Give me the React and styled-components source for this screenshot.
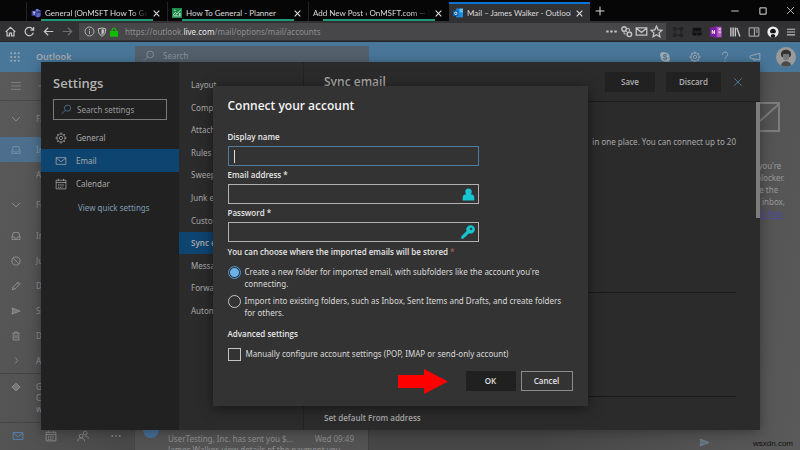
import React, { useState } from "react";
import styled, { createGlobalStyle, css } from "styled-components";

const GlobalStyle = createGlobalStyle`
  * {
    box-sizing: border-box;
  }

  body {
    margin: 0;
    background: #505050;
  }

  button,
  input {
    font: inherit;
    color: inherit;
  }

  h1, h2, h3, p, ul {
    margin: 0;
    padding: 0;
  }

  ul {
    list-style: none;
  }
`;

const Page = styled.div`
  display: flex;
  flex-direction: column;
  height: 100vh;
  overflow: hidden;
  font-family: "Noto Sans", "Open Sans", sans-serif;
  font-size: 8px;
  line-height: 12px;
  color: #a8a8a8;
`;

const IconButton = styled.button`
  display: flex;
  align-items: center;
  justify-content: center;
  flex: none;
  padding: 0;
  border: 0;
  background: none;
  color: ${(p) => p.$color || "inherit"};
`;

const Svg = styled.svg.attrs({ viewBox: "0 0 16 16", "aria-hidden": true })`
  flex: none;
  display: block;
  width: ${(p) => p.$size || 12}px;
  height: ${(p) => p.$size || 12}px;
  fill: none;
  stroke: currentColor;
  stroke-width: ${(p) => p.$weight || 1.2};
`;

/* ---------- browser chrome ---------- */

const TabStrip = styled.div`
  display: flex;
  flex: none;
  height: 21px;
  padding-left: 26px;
  background: #060607;
  color: #dcdcdc;
`;

const Tab = styled.div`
  display: flex;
  align-items: center;
  gap: 4px;
  flex: 0 1 141px;
  min-width: 0;
  margin-top: 2px;
  padding: 3px 6px 0 4px;
  border-left: 1px solid #232325;
  background: linear-gradient(#1d9a78, #1d9a78) 14px 100% / 112px 2px no-repeat;

  ${(p) =>
    p.$active &&
    css`
      padding-top: 1px;
      border-left: 0;
      border-top: 2px solid #0a74d8;
      background: #323234;
    `}
`;

const TabTitle = styled.span`
  flex: 1;
  overflow: hidden;
  white-space: nowrap;
  font-family: Lato, "Noto Sans", sans-serif;
  mask-image: ${(p) =>
    p.$fade ? "linear-gradient(to right, #000 84%, transparent)" : "none"};
`;

const NewTab = styled(IconButton)`
  width: 20px;
`;

const WindowButtons = styled.div`
  display: flex;
  align-items: center;
  gap: 17px;
  margin-left: auto;
  padding-right: 4px;
`;

const NavBar = styled.div`
  display: flex;
  align-items: center;
  flex: none;
  height: 21px;
  padding: 1px 4px 0 5px;
  border-bottom: 1px solid #262628;
  background: #323234;
  color: #c4c4c4;
`;

const NavButtons = styled.div`
  display: flex;
  gap: 8px;
  width: 74px;
`;

const UrlBox = styled.div`
  display: flex;
  align-items: center;
  gap: 2px;
  flex: 1;
  height: 17px;
  padding: 0 3px 0 5px;
  background: #474749;
`;

const UrlInput = styled.div`
  flex: 1;
  padding-left: 4px;
  color: #8e8e8e;

  b {
    color: #e6e6e6;
    font-weight: 400;
  }
`;

const Extensions = styled.div`
  display: flex;
  align-items: center;
  gap: 7px;
  padding-left: 6px;
`;

/* ---------- mail page ---------- */

const Content = styled.div`
  position: relative;
  display: flex;
  flex-direction: column;
  flex: 1;
  min-height: 0;
`;

const OutlookBar = styled.header`
  display: flex;
  align-items: flex-start;
  flex: none;
  height: 30px;
  background: #49779a;
  color: #a3adb5;
`;

const Brand = styled.div`
  display: flex;
  align-items: center;
  gap: 15px;
  width: 135px;
  height: 30px;
  padding-left: 9px;
  font-size: 9px;
  font-weight: 600;
  line-height: 14px;
`;

const TopSearch = styled.div`
  display: flex;
  align-items: center;
  gap: 8px;
  width: 234px;
  height: 22px;
  margin-top: 4px;
  padding: 0 8px 2px;
  background: #54616d;
  color: #8a949c;
`;

const BarActions = styled.div`
  display: flex;
  align-items: center;
  gap: 15px;
  height: 30px;
  margin-left: auto;
  padding-right: 4px;
`;

const BarIcons = styled.div`
  display: flex;
  gap: 18px;
`;

const Avatar = styled.svg`
  width: 20px;
  height: 20px;
`;

const Workspace = styled.div`
  display: flex;
  flex: 1;
  min-height: 0;
  overflow: hidden;
  background: linear-gradient(100deg, #5a5a5a, #474747 25%, #474747 70%, #5a5a5a);
  color: #8f8f8f;
`;

const FolderPane = styled.nav`
  display: flex;
  flex-direction: column;
  flex: 0 0 135px;
  border-right: 1px solid #454545;
`;

const FolderRow = styled.div`
  display: flex;
  align-items: center;
  gap: 14px;
  flex: none;
  height: ${(p) => p.$height || 25}px;
  padding-left: 10px;
  white-space: nowrap;
  color: ${(p) => (p.$active ? "#7f98ad" : "inherit")};
  background: ${(p) => (p.$active ? "#4d6f8d" : "none")};
  border-bottom: ${(p) => (p.$line ? "1px solid #484848" : "0")};
`;

const IconSlot = styled.span`
  display: flex;
  justify-content: center;
  width: 12px;
`;

const Upgrade = styled.div`
  display: flex;
  gap: 14px;
  flex: none;
  height: 50px;
  padding: 7px 0 0 10px;
  border-top: 1px solid #434343;
  border-bottom: 1px solid #434343;
  line-height: 11px;
`;

const Modules = styled.div`
  display: flex;
  justify-content: space-between;
  padding: 7px 12px 0;
`;

const MessageList = styled.section`
  display: flex;
  align-items: flex-end;
  flex: 0 0 234px;
  border-right: 1px solid #3f3f3f;
`;

const Message = styled.article`
  display: flex;
  gap: 9px;
  width: 100%;
  height: 28px;
  padding: 0 14px 0 8px;
  background: #535353;
`;

const Sender = styled.span`
  width: 16px;
  height: 16px;
  border-radius: 50%;
  background: #47719a;
`;

const MessageText = styled.div`
  flex: 1;
  padding-top: 11px;
  line-height: 11px;
  white-space: nowrap;

  p {
    display: flex;
    justify-content: space-between;
  }
`;

const ReadingPane = styled.main`
  display: flex;
  align-items: flex-end;
  justify-content: flex-end;
  flex: 1;
  padding: 0 0 2px;
  color: #6e8596;
`;

const AdColumn = styled.aside`
  display: flex;
  flex-direction: column;
  justify-content: space-between;
  flex: 0 0 90px;
  padding-top: 30px;
`;

const AdMessage = styled.div`
  display: flex;
  flex-direction: column;
  align-items: center;
  padding-right: 15px;
  white-space: nowrap;
  color: #9a9a9a;

  svg {
    margin-bottom: 28px;
  }

  a {
    color: #4b4b9c;
  }
`;

const Watermark = styled.div`
  padding-right: 7px;
  text-align: right;
  font-family: "Liberation Sans", sans-serif;
  color: #111;
`;

/* ---------- settings panel ---------- */

const SettingsLayer = styled.div`
  position: absolute;
  inset: 0;
  display: flex;
  padding: 20px 40px 20px 41px;
`;

const SettingsPanel = styled.section`
  display: flex;
  flex: 1;
  min-width: 0;
  overflow: hidden;
  background: #2b2b2b;
  box-shadow: 0 2px 12px rgba(0, 0, 0, 0.35);
`;

const SettingsNav = styled.nav`
  flex: 0 0 138px;
  background: #212121;
`;

const SettingsTitle = styled.h1`
  padding: 12px 12px 0;
  font-family: "Open Sans", sans-serif;
  font-size: 13px;
  line-height: 18px;
  font-weight: 600;
  color: #b4b4b4;
`;

const SettingsSearch = styled.label`
  display: flex;
  align-items: center;
  gap: 5px;
  height: 21px;
  margin: 7px 12px 6px;
  padding: 0 7px;
  border: 1px solid #7a7a7a;
  color: #4f7593;

  input {
    width: 100%;
    min-width: 0;
    padding: 0;
    border: 0;
    outline: 0;
    background: none;
  }

  input::placeholder {
    color: #9a9a9a;
    opacity: 1;
  }
`;

const NavItem = styled.button`
  display: flex;
  align-items: center;
  gap: 9px;
  width: 100%;
  height: 23px;
  padding: 0 14px;
  border: 0;
  background: ${(p) => (p.$active ? "#0e4470" : "none")};
  text-align: left;
`;

const QuickLink = styled.a`
  display: block;
  padding: 7px 0 0 37px;
  color: #7f9cb3;
  text-decoration: none;
`;

const Categories = styled.ul`
  display: grid;
  grid-auto-rows: 1fr;
  flex: 0 0 124px;
  height: 248px;
  margin-top: 12px;
`;

const Category = styled.li`
  display: flex;
  align-items: center;
  padding-left: 12px;
  white-space: nowrap;
  background: ${(p) => (p.$active ? "#0e4470" : "none")};
  font-weight: ${(p) => (p.$active ? 600 : 400)};
`;

const Detail = styled.div`
  display: flex;
  flex-direction: column;
  flex: 1;
  min-width: 0;
  border-left: 1px solid #222;
`;

const DetailHeader = styled.header`
  display: flex;
  align-items: center;
  gap: 11px;
  flex: none;
  height: 40px;
  padding: 0 16px 0 20px;
  border-bottom: 1px solid #1d1d1d;

  h2 {
    flex: 1;
    font-family: "Open Sans", sans-serif;
    font-size: 12px;
    line-height: 18px;
    font-weight: 600;
  }
`;

const HeaderButton = styled.button`
  height: 20px;
  padding: 0 13px;
  border: 0;
  background: #212121;
  font-family: "Open Sans", sans-serif;
  font-weight: 600;
  color: #b0b0b0;

  &:first-of-type {
    padding: 0 16px;
  }
`;

const DetailBody = styled.div`
  display: flex;
  flex: 1;
  min-height: 0;
`;

const Sections = styled.div`
  flex: 1;
  padding-left: 20px;
`;

const Section = styled.div`
  height: ${(p) => p.$height}px;
  padding-top: ${(p) => p.$top || 0}px;
  border-bottom: 1px solid #191919;
  text-align: right;
`;

const SectionTitle = styled.h3`
  padding-top: 15px;
  font-family: "Open Sans", sans-serif;
  font-size: 8px;
  font-weight: 600;
`;

const ScrollThumb = styled.div`
  width: 4px;
  height: 116px;
  margin-left: 20px;
  background: #7d7d7d;
`;

/* ---------- connect dialog ---------- */

const DialogLayer = styled.div`
  position: absolute;
  inset: 0;
  display: flex;
  align-items: center;
  justify-content: center;
`;

const Dialog = styled.form`
  width: 375px;
  padding: 12px 15px 15px;
  background: #333;
  box-shadow: 0 2px 12px rgba(0, 0, 0, 0.5);
  color: #dadada;
`;

const DialogTitle = styled.h2`
  margin-bottom: 18px;
  font-family: "Open Sans", sans-serif;
  font-size: 12px;
  line-height: 16px;
  font-weight: 600;
  color: #f4f4f4;
`;

const Field = styled.div`
  display: grid;
  gap: 4px;
  width: 251px;
  margin-bottom: 4px;
`;

const Caption = styled.label`
  display: block;
  font-family: "Open Sans", sans-serif;
  font-size: 8px;
  font-weight: 600;
  line-height: 10px;
  color: #e6e6e6;
`;

const StorageCaption = styled(Caption)`
  padding-top: 1px;
`;

const Box = styled.div`
  display: flex;
  align-items: center;
  height: 20px;
  padding-right: 3px;
  border: 1px solid ${(p) => (p.$focused ? "#4f7d9e" : "#b5b0b0")};
  color: #18c5d2;

  input {
    flex: 1;
    min-width: 0;
    padding: 0 4px;
    border: 0;
    outline: 0;
    background: none;
    color: #eee;
  }
`;

const Caret = styled.span`
  width: 1px;
  height: 13px;
  margin-left: 5px;
  background: #e0e0e0;
`;

const Choices = styled.div`
  display: grid;
  gap: 5px;
  margin: 9px 0 10px;
`;

const Choice = styled.label`
  display: flex;
  gap: ${(p) => p.$gap || 4}px;
  padding-right: 5px;
  line-height: 12px;

  input {
    appearance: none;
    flex: none;
    width: 13px;
    height: 13px;
    margin: 0;
    border: 1px solid #c4c4c4;
  }

  input[type="radio"] {
    border-radius: 50%;
  }

  input[type="radio"]:checked {
    border-color: #5b93bd;
    background: radial-gradient(#6fb0e2 0 4px, #1d3d55 5px);
  }
`;

const Star = styled.span`
  color: #a8604a;
`;

const DialogFooter = styled.footer`
  display: flex;
  align-items: center;
  justify-content: flex-end;
  gap: 5px;
  height: 20px;
`;

const Arrow = styled.svg`
  width: 50px;
  height: 25px;
  margin-right: 13px;
  fill: #fe0000;
`;

const DialogButton = styled.button`
  height: 20px;
  padding: 0;
  width: ${(p) => (p.$primary ? 50 : 52)}px;
  border: 1px solid ${(p) => (p.$primary ? "#202020" : "#8c8c8c")};
  background: ${(p) => (p.$primary ? "#202020" : "none")};
  font-family: "Open Sans", sans-serif;
  font-weight: 600;
  color: #e0e0e0;
`;

/* ---------- icons ---------- */

const paths = {
  close: <path d="M3 3l10 10M13 3L3 13" />,
  plus: <path d="M8 1v14M1 8h14" />,
  minimize: <path d="M3 8h10" />,
  maximize: <path d="M3 3h10v10H3z" />,
  home: <path d="M1 8.5L8 2l7 6.5M3 8v6.5h3.5v-4h3v4H13V8" />,
  reload: <path d="M13.5 9.5A6 6 0 1 1 12 4l1.5 1.5M14 1.5v4.5H9.5" />,
  back: <path d="M15 8H2M7.5 2.5L2 8l5.5 5.5" />,
  forward: <path d="M1 8h13M8.5 2.5L14 8l-5.5 5.5" />,
  info: (
    <>
      <circle cx="8" cy="8" r="6.5" />
      <path d="M8 7v4.5M8 4.2v1.6" />
    </>
  ),
  shield: (
    <>
      <path d="M8 1.5l6 1.5c0 6-2 9.5-6 12-4-2.5-6-6-6-12z" />
      <path d="M8 4v8c2-1.5 3-4 3-7z" fill="currentColor" />
    </>
  ),
  lock: (
    <>
      <path d="M5 7V5a3 3 0 0 1 6 0v2" />
      <path d="M2.5 7.5h11v7h-11z" fill="currentColor" />
    </>
  ),
  dots: <path d="M1.5 8h3M6.5 8h3M11.5 8h3" strokeWidth="2.5" />,
  smallDots: <path d="M2 8h2M7 8h2M12 8h2" strokeWidth="1.8" />,
  links: (
    <>
      <circle cx="5" cy="5" r="2.8" />
      <circle cx="11.5" cy="11.5" r="2.8" />
      <path d="M7 7l2.5 2.5M5 8.5v2.5h2M8.5 4.5h3v3" strokeWidth="1.2" />
    </>
  ),
  mail: <path d="M1.5 3.5h13v9h-13zM1.5 4l6.5 5 6.5-5" />,
  star: <path d="M8 1.5l2 4.5 4.8.5-3.6 3.2 1 4.8L8 12l-4.2 2.5 1-4.8L1.2 6.5 6 6z" />,
  grid4: <path d="M2 2v3h3V2zM11 2v3h3V2zM2 11v3h3v-3zM11 11v3h3v-3zM5 4h6M5 12h6M4 5v6M12 5v6" />,
  mask: (
    <>
      <path d="M3 6h10v-3H3zM1 8h14" fill="currentColor" />
      <path d="M2 10h5v2H3zM9 10h5l-1 2H9z" fill="currentColor" />
    </>
  ),
  library: <path d="M2.5 2v12M5.5 2v12M8.5 2v12M10.5 2.5L14.5 14" strokeWidth="1.9" />,
  reader: (
    <>
      <path d="M1.5 2.5h13v11h-13z" />
      <path d="M8.5 3v10M10.5 5.5h2.5M10.5 8h2.5" />
    </>
  ),
  menu: <path d="M1.5 3.5h13M1.5 8h13M1.5 12.5h13" />,
  search: (
    <>
      <circle cx="9.5" cy="6" r="4.5" />
      <path d="M6.2 9.3L1 14.5" />
    </>
  ),
  skype: (
    <>
      <circle cx="8" cy="8" r="5.5" fill="currentColor" />
      <circle cx="5" cy="5" r="3" fill="currentColor" />
      <circle cx="11" cy="11" r="3" fill="currentColor" />
      <path
        d="M10.2 6c-.5-1.8-4.2-1.6-4.2.2 0 2 4.3 1.4 4.3 3.4 0 2-4 2-4.5 0"
        stroke="#49779a"
        strokeWidth="1.6"
      />
    </>
  ),
  gear: (
    <>
      <circle cx="8" cy="8" r="5.5" />
      <circle cx="8" cy="8" r="2.2" />
      <path d="M8 .5v3M8 12.5v3M.5 8h3M12.5 8h3M2.7 2.7l2 2M11.3 11.3l2 2M13.3 2.7l-2 2M4.7 11.3l-2 2" />
    </>
  ),
  help: (
    <>
      <path d="M4.5 5c0-5 7.5-4.5 7 0-.3 2.5-3.5 2.7-3.5 6" />
      <path d="M8 12.8v1.7" />
    </>
  ),
  horn: <path d="M14.5 3v9L1.5 9.5v-3zM5 10c0 3 4 3 4.5 1" />,
  chevron: <path d="M2 5l6 6 6-6" />,
  next: <path d="M6 3l4 5-4 5" />,
  inbox: (
    <>
      <path d="M1.5 10l2-7.5h9l2 7.5v3.5h-13z" />
      <path d="M1.5 9.5H5l1.5 2h3l1.5-2h3.5" />
    </>
  ),
  junk: (
    <>
      <circle cx="8" cy="8" r="6.5" />
      <path d="M3.5 3.5l9 9" />
    </>
  ),
  pencil: <path d="M2 14l1-4 8.5-8.5 3 3L6 13zM10 3l3 3M3 10l3 3" />,
  send: <path d="M1.5 3l13 5-13 5L3 8z" fill="currentColor" fillOpacity="0.6" />,
  trash: <path d="M2 3.5h12M5.5 3V1.5h5V3M3.5 4v10.5h9V4M6.5 6.5v5.5M9.5 6.5v5.5" />,
  diamond: <path d="M8 3l5.5 5L8 13 2.5 8z" fill="currentColor" fillOpacity="0.6" />,
  calendar: (
    <>
      <path d="M1.5 3h13v11.5h-13zM1.5 6h13M4.5 1v3M11.5 1v3" />
      <path d="M4 8.5h8M4 10.5h8M4 12.5h6" strokeDasharray="1.4 1" />
    </>
  ),
  people: (
    <>
      <circle cx="11" cy="4" r="2.5" />
      <circle cx="5.5" cy="8" r="2.5" />
      <path d="M1 15c0-6 9-6 9 0M10.5 8c2.5-.5 4.5 1 4.5 3.5" />
    </>
  ),
  person: (
    <path
      d="M8 .5c3 0 4 2 4 4S10.5 8.5 8 8.5 4 6.5 4 4.5 5 .5 8 .5zM.8 15.5V12c0-3 2-4 4.2-4.2h6c2.2.2 4.2 1.2 4.2 4.2v3.5z"
      fill="currentColor"
      stroke="none"
    />
  ),
  key: (
    <path
      d="M11 .5a4.5 4.5 0 1 1-1.8 8.6L8 10.5l-1 .2-.3 1.3-1.3.3-.2 1.2-1.4.3L2.5 15.5H.5V13l6.2-6.2A4.5 4.5 0 0 1 11 .5zm.8 2.4a1.6 1.6 0 1 0 1.3 1.5 1.5 1.5 0 0 0-1.3-1.5z"
      fill="currentColor"
      fillRule="evenodd"
      stroke="currentColor"
      strokeWidth="0.6"
    />
  ),
  teams: (
    <>
      <g stroke="none">
        <circle cx="10" cy="3.5" r="2.5" fill="#7b83eb" />
        <circle cx="14" cy="5" r="1.7" fill="#5059c9" />
        <path d="M7 7h8.5v5c0 3-7.5 5-8.5 0z" fill="#5b63c7" />
        <path d="M1 4.5h8v8H1z" fill="#3c449c" />
      </g>
      <path d="M3 6.5h4M5 6.5v4.5" stroke="#fff" />
    </>
  ),
  planner: (
    <>
      <path d="M0 0h16v16H0z" fill="#1e8a4a" stroke="none" />
      <path d="M3 3.5h3M2 11l3.5-4 2.5 2.5 6-6.5" stroke="#d8f0df" />
      <path d="M3.5 13.5v-2M6.5 13.5v-3M9.5 13.5V12M12.5 13.5V8" stroke="#d8f0df" strokeWidth="2" />
    </>
  ),
  outlook: (
    <g stroke="none">
      <path d="M5 1h11v14H5z" fill="#1f8ae0" />
      <path d="M10.5 1H16v6h-5.5z" fill="#5cc0f5" />
      <path d="M0 4h9v9H0z" fill="#0a5eb0" />
      <circle cx="4.5" cy="8.5" r="2" stroke="#fff" strokeWidth="1.3" fill="none" />
    </g>
  ),
  onenote: (
    <g stroke="none">
      <path d="M6 1h9.5v14H6z" fill="#b057c8" />
      <path d="M11.5 3h3v2.5h-3zM11.5 7h3v2.5h-3z" fill="#e4b8ee" />
      <path d="M0 2l9-1.5v15L0 14z" fill="#7b1fa0" />
      <path d="M3 10.5v-5l3 5v-5" fill="none" stroke="#fff" />
    </g>
  ),
  profile: (
    <g stroke="none">
      <circle cx="8" cy="8" r="7.5" fill="#ececec" />
      <path d="M4 8c0-6 8-6 8 0l-1.5 1.5h-5zM5 13c1-2.5 5-2.5 6 0l-1 2.5H6z" fill="#161616" />
    </g>
  ),
};

const Icon = ({ name, size, weight }) => (
  <Svg $size={size} $weight={weight}>
    {paths[name]}
  </Svg>
);

const Waffle = () => (
  <Svg $size={12}>
    <g fill="currentColor" stroke="none">
      {[3, 8, 13].map((y) =>
        [3, 8, 13].map((x) => <circle key={`${x}-${y}`} cx={x} cy={y} r="1.3" />)
      )}
    </g>
  </Svg>
);

/* ---------- data ---------- */

const tabs = [
  { icon: "teams", title: "General (OnMSFT How To General)", fade: true },
  { icon: "planner", title: "How To General - Planner" },
  { title: "Add New Post ‹ OnMSFT.com — WordPress", fade: true },
  { icon: "outlook", title: "Mail – James Walker - Outlook", active: true },
];

const folders = [
  { icon: "inbox", label: "Inbox" },
  { icon: "junk", label: "Junk Email" },
  { icon: "pencil", label: "Drafts" },
  { icon: "send", label: "Sent Items" },
  { icon: "trash", label: "Deleted Items" },
];

const categories = [
  "Layout",
  "Compose and reply",
  "Attachments",
  "Rules",
  "Sweep",
  "Junk email",
  "Customize actions",
  "Sync email",
  "Message handling",
  "Forwarding",
  "Automatic replies",
];

const navItems = [
  { icon: "gear", label: "General" },
  { icon: "mail", label: "Email" },
  { icon: "calendar", label: "Calendar" },
];

const BrowserChrome = () => (
  <>
    <TabStrip>
      {tabs.map((tab) => (
        <Tab key={tab.title} $active={tab.active}>
          {tab.icon && <Icon name={tab.icon} size={10} />}
          <TabTitle $fade={tab.fade}>{tab.title}</TabTitle>
          <IconButton aria-label="Close tab">
            <Icon name="close" size={9} weight={2} />
          </IconButton>
        </Tab>
      ))}
      <NewTab aria-label="New tab">
        <Icon name="plus" size={10} weight={1.6} />
      </NewTab>
      <WindowButtons>
        <IconButton aria-label="Minimize"><Icon name="minimize" /></IconButton>
        <IconButton aria-label="Maximize"><Icon name="maximize" size={10} weight={1.6} /></IconButton>
        <IconButton aria-label="Close"><Icon name="close" size={11} /></IconButton>
      </WindowButtons>
    </TabStrip>
    <NavBar>
      <NavButtons>
        <IconButton aria-label="Home"><Icon name="home" size={11} weight={1.8} /></IconButton>
        <IconButton aria-label="Reload"><Icon name="reload" size={11} weight={1.8} /></IconButton>
        <IconButton aria-label="Back"><Icon name="back" size={11} weight={1.8} /></IconButton>
        <IconButton aria-label="Forward" $color="#6f6f71"><Icon name="forward" size={11} weight={1.8} /></IconButton>
      </NavButtons>
      <UrlBox>
        <IconButton aria-label="Site information"><Icon name="info" size={11} /></IconButton>
        <IconButton aria-label="Tracking protection"><Icon name="shield" size={10} weight={1.6} /></IconButton>
        <IconButton aria-label="Secure" $color="#12bc00"><Icon name="lock" size={10} weight={2} /></IconButton>
        <UrlInput>
          https://outlook.<b>live.com</b>/mail/options/mail/accounts
        </UrlInput>
        <IconButton aria-label="Page actions"><Icon name="dots" size={13} /></IconButton>
        <IconButton aria-label="Containers"><Icon name="links" size={13} weight={1.8} /></IconButton>
        <IconButton aria-label="Email link"><Icon name="mail" size={13} weight={1.6} /></IconButton>
        <IconButton aria-label="Bookmark"><Icon name="star" size={13} weight={1.6} /></IconButton>
      </UrlBox>
      <Extensions>
        <IconButton aria-label="Extension" $color="#1c1c1e"><Icon name="grid4" /></IconButton>
        <IconButton aria-label="Private" $color="#111113"><Icon name="mask" /></IconButton>
        <IconButton aria-label="OneNote"><Icon name="onenote" /></IconButton>
        <IconButton aria-label="Library"><Icon name="library" /></IconButton>
        <IconButton aria-label="Reader"><Icon name="reader" /></IconButton>
        <IconButton aria-label="Account"><Icon name="profile" /></IconButton>
        <IconButton aria-label="Menu"><Icon name="menu" size={10} weight={1.8} /></IconButton>
      </Extensions>
    </NavBar>
  </>
);

const MailPage = () => (
  <>
    <OutlookBar>
      <Brand>
        <Waffle />
        Outlook
      </Brand>
      <TopSearch>
        <Icon name="search" />
        Search
      </TopSearch>
      <BarActions>
        <BarIcons>
          <Icon name="skype" />
          <Icon name="gear" />
          <Icon name="help" />
          <Icon name="horn" />
        </BarIcons>
        <Avatar viewBox="0 0 20 20" aria-hidden="true">
          <circle cx="10" cy="10" r="10" fill="#9a9a9a" />
          <path d="M5 8c-1-7 11-7 10 0l-1 2H6z" fill="#333" />
          <path d="M7 7h6v4c-1 3-5 3-6 0z" fill="#777" />
          <path d="M5 18c1-5 9-5 10 0-2 2-8 2-10 0z" fill="#4a4a4a" />
        </Avatar>
      </BarActions>
    </OutlookBar>
    <Workspace>
      <FolderPane>
        <FolderRow $height={29} $line>
          <IconSlot><Icon name="menu" weight={1} /></IconSlot>
          <Icon name="minimize" weight={1} />
        </FolderRow>
        <FolderRow $height={36}>
          <IconSlot><Icon name="chevron" size={10} weight={1.6} /></IconSlot>
          Favorites
        </FolderRow>
        <FolderRow $active>
          <IconSlot><Icon name="inbox" size={10} /></IconSlot>
          Inbox
        </FolderRow>
        <FolderRow>
          <IconSlot />
          Add favorite
        </FolderRow>
        <FolderRow $height={36}>
          <IconSlot><Icon name="chevron" size={10} weight={1.6} /></IconSlot>
          Folders
        </FolderRow>
        {folders.map((folder) => (
          <FolderRow key={folder.label}>
            <IconSlot><Icon name={folder.icon} size={10} weight={1.5} /></IconSlot>
            {folder.label}
          </FolderRow>
        ))}
        <FolderRow>
          <IconSlot><Icon name="next" size={9} weight={1.6} /></IconSlot>
          Archive
        </FolderRow>
        <Upgrade>
          <IconSlot><Icon name="diamond" size={12} /></IconSlot>
          <div>
            Get
            <br />
            Cloud
            <br />
            with
          </div>
        </Upgrade>
        <Modules>
          <IconButton aria-label="Mail" $color="#5486b8"><Icon name="mail" /></IconButton>
          <IconButton aria-label="Calendar"><Icon name="calendar" /></IconButton>
          <IconButton aria-label="People"><Icon name="people" /></IconButton>
          <IconButton aria-label="More"><Icon name="smallDots" /></IconButton>
        </Modules>
      </FolderPane>
      <MessageList>
        <Message>
          <Sender />
          <MessageText>
            <p>
              <span>UserTesting, Inc. has sent you $...</span>
              <span>Wed 09:49</span>
            </p>
            <p>James Walker, view details of the payment you</p>
          </MessageText>
        </Message>
      </MessageList>
      <ReadingPane>
        <Icon name="send" size={11} />
      </ReadingPane>
      <AdColumn>
        <AdMessage>
          <svg width="64" height="30" viewBox="0 0 64 30" fill="none" stroke="#7c7c7c" strokeWidth="2">
            <path d="M1 1h62v28H1zM63 2L34 28 1 2" />
          </svg>
          <div>It looks like you're</div>
          <div>using an ad blocker.</div>
          <div>To maximize the</div>
          <div>space in your inbox,</div>
          <a href="#adfree">sign up for Ad-free</a>
        </AdMessage>
        <Watermark>wsxdn.com</Watermark>
      </AdColumn>
    </Workspace>
  </>
);

const Settings = () => (
  <SettingsLayer>
    <SettingsPanel>
      <SettingsNav>
        <SettingsTitle>Settings</SettingsTitle>
        <SettingsSearch>
          <Icon name="search" size={11} />
          <input type="text" placeholder="Search settings" aria-label="Search settings" />
        </SettingsSearch>
        {navItems.map((item) => (
          <NavItem key={item.label} $active={item.label === "Email"}>
            <IconSlot><Icon name={item.icon} size={12} weight={1} /></IconSlot>
            {item.label}
          </NavItem>
        ))}
        <QuickLink href="#quick">View quick settings</QuickLink>
      </SettingsNav>
      <Categories>
        {categories.map((name) => (
          <Category key={name} $active={name === "Sync email"}>
            {name}
          </Category>
        ))}
      </Categories>
      <Detail>
        <DetailHeader>
          <h2>Sync email</h2>
          <HeaderButton>Save</HeaderButton>
          <HeaderButton>Discard</HeaderButton>
          <IconButton aria-label="Close settings" $color="#4f7f9f">
            <Icon name="close" />
          </IconButton>
        </DetailHeader>
        <DetailBody>
          <Sections>
            <Section $height={191} $top={34}>
              in one place. You can connect up to 20
            </Section>
            <Section $height={104} />
            <SectionTitle>Set default From address</SectionTitle>
          </Sections>
          <ScrollThumb />
        </DetailBody>
      </Detail>
    </SettingsPanel>
  </SettingsLayer>
);

const ConnectDialog = () => {
  const [target, setTarget] = useState("new");
  const [manual, setManual] = useState(false);

  return (
    <DialogLayer>
      <Dialog onSubmit={(e) => e.preventDefault()}>
        <DialogTitle>Connect your account</DialogTitle>
        <Field>
          <Caption htmlFor="name">Display name</Caption>
          <Box $focused>
            <Caret />
            <input id="name" type="text" />
          </Box>
        </Field>
        <Field>
          <Caption htmlFor="email">Email address *</Caption>
          <Box>
            <input id="email" type="email" />
            <Icon name="person" size={13} />
          </Box>
        </Field>
        <Field>
          <Caption htmlFor="password">Password *</Caption>
          <Box>
            <input id="password" type="password" />
            <Icon name="key" size={14} />
          </Box>
        </Field>
        <StorageCaption as="p">
          You can choose where the imported emails will be stored <Star>*</Star>
        </StorageCaption>
        <Choices>
          <Choice>
            <input
              type="radio"
              name="target"
              checked={target === "new"}
              onChange={() => setTarget("new")}
            />
            Create a new folder for imported email, with subfolders like the account you're
            connecting.
          </Choice>
          <Choice>
            <input
              type="radio"
              name="target"
              checked={target === "existing"}
              onChange={() => setTarget("existing")}
            />
            Import into existing folders, such as Inbox, Sent Items and Drafts, and create folders
            for others.
          </Choice>
        </Choices>
        <Caption as="h3">Advanced settings</Caption>
        <Choices>
          <Choice $gap={5}>
            <input
              type="checkbox"
              checked={manual}
              onChange={(e) => setManual(e.target.checked)}
            />
            Manually configure account settings (POP, IMAP or send-only account)
          </Choice>
        </Choices>
        <DialogFooter>
          <Arrow viewBox="0 0 50 25" aria-hidden="true">
            <path d="M0 6h26V0l24 12.5L26 25v-6H0z" />
          </Arrow>
          <DialogButton $primary>OK</DialogButton>
          <DialogButton type="button">Cancel</DialogButton>
        </DialogFooter>
      </Dialog>
    </DialogLayer>
  );
};

const App = () => (
  <Page>
    <GlobalStyle />
    <BrowserChrome />
    <Content>
      <MailPage />
      <Settings />
      <ConnectDialog />
    </Content>
  </Page>
);

export default App;
